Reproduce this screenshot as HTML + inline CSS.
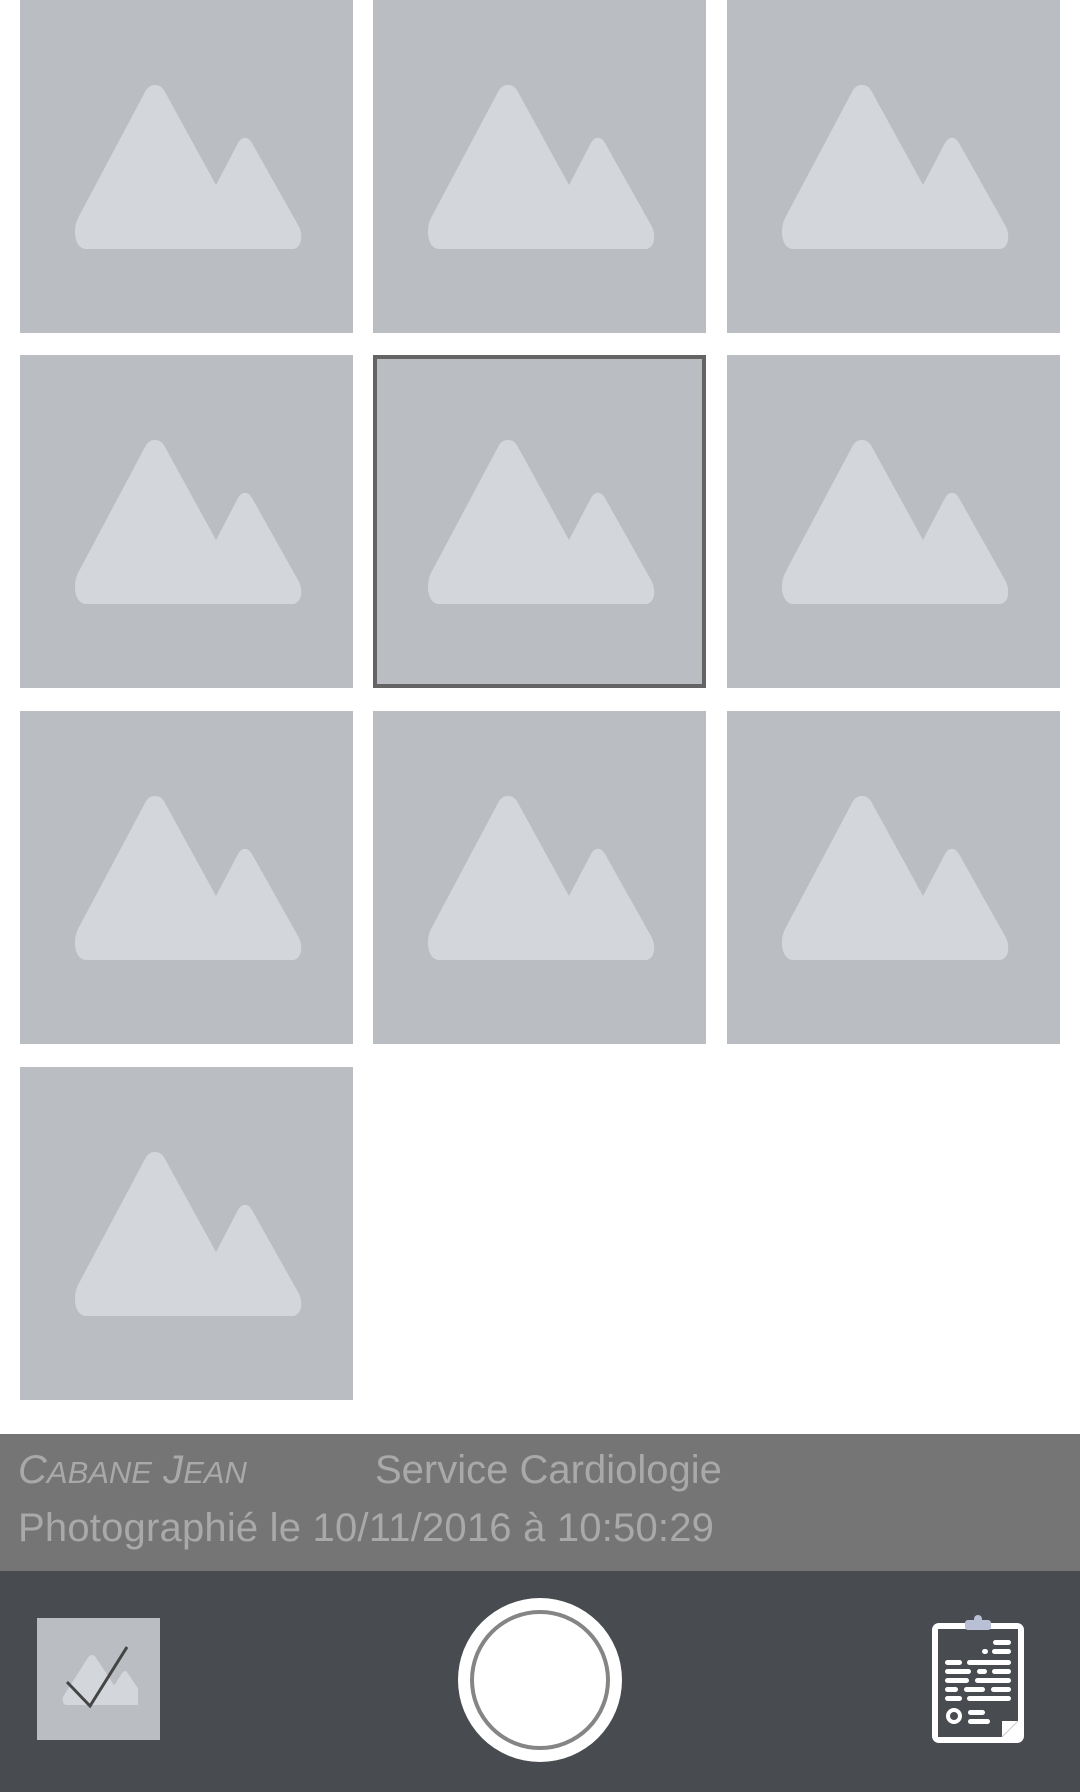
<!DOCTYPE html>
<html><head><meta charset="utf-8"><style>
*{margin:0;padding:0;box-sizing:border-box}
body{width:1080px;height:1792px;background:#fff;position:relative;overflow:hidden;font-family:"Liberation Sans",sans-serif}
.t{position:absolute;width:333px;height:333px;background:#babdc2}
.t svg{position:absolute;left:0;top:0}
.sel{border:4px solid #646464}
.sel svg{left:-4px;top:-4px}
#info{position:absolute;left:0;top:1434px;width:1080px;height:137px;background:#757575;color:#a9a9a9}
#bar{position:absolute;left:0;top:1571px;width:1080px;height:221px;background:#484b50}
</style></head><body>
<svg width="0" height="0" style="position:absolute"><defs><symbol id="m" viewBox="0 0 333 333"><path fill="#d3d6db" d="M135 85 C130 85 127 88 125 92 L58 218 C52 230 55 249 66 249 L272 249 C283 249 283 233 278 225 L232 143 C228 136 222 136 218 143 L196 185 L145 92 C143 88 140 85 135 85Z"/></symbol></defs></svg>
<div class="t" style="left:20px;top:0"><svg width="333" height="333"><use href="#m"/></svg></div>
<div class="t" style="left:373px;top:0"><svg width="333" height="333"><use href="#m"/></svg></div>
<div class="t" style="left:727px;top:0"><svg width="333" height="333"><use href="#m"/></svg></div>
<div class="t" style="left:20px;top:355px"><svg width="333" height="333"><use href="#m"/></svg></div>
<div class="t sel" style="left:373px;top:355px"><svg width="333" height="333"><use href="#m"/></svg></div>
<div class="t" style="left:727px;top:355px"><svg width="333" height="333"><use href="#m"/></svg></div>
<div class="t" style="left:20px;top:711px"><svg width="333" height="333"><use href="#m"/></svg></div>
<div class="t" style="left:373px;top:711px"><svg width="333" height="333"><use href="#m"/></svg></div>
<div class="t" style="left:727px;top:711px"><svg width="333" height="333"><use href="#m"/></svg></div>
<div class="t" style="left:20px;top:1067px"><svg width="333" height="333"><use href="#m"/></svg></div>
<div id="info">
<div style="position:absolute;left:18px;top:14px;font-size:40px;font-style:italic">C<span style="font-size:31px">ABANE</span> J<span style="font-size:31px">EAN</span></div>
<div style="position:absolute;left:375px;top:14px;font-size:40px">Service Cardiologie</div>
<div style="position:absolute;left:18px;top:72px;font-size:40px;letter-spacing:0.2px">Photographié le 10/11/2016 à 10:50:29</div>
</div>
<div id="bar">
<div style="position:absolute;left:37px;top:47px;width:123px;height:122px;background:#babdc2">
<svg width="123" height="122" style="position:absolute;left:0;top:0">
<svg x="18" y="37" width="83" height="50" viewBox="34 85 227 164" preserveAspectRatio="none"><path fill="#d3d6db" d="M135 85 C130 85 127 88 125 92 L58 218 C52 230 55 249 66 249 L272 249 C283 249 283 233 278 225 L232 143 C228 136 222 136 218 143 L196 185 L145 92 C143 88 140 85 135 85Z"/></svg>
<path d="M30 64 L53 88 L90 29" fill="none" stroke="#444" stroke-width="3"/></svg>
</div>
<div style="position:absolute;left:458px;top:27px;width:164px;height:164px;border-radius:50%;background:#fff"></div>
<div style="position:absolute;left:470px;top:39px;width:140px;height:140px;border-radius:50%;border:4px solid #858585;background:#fff"></div>
<svg style="position:absolute;left:925px;top:40px" width="110" height="140" viewBox="0 0 110 140">
<rect x="7" y="12" width="92" height="120" rx="7" fill="#fff"/>
<rect x="13" y="18" width="80" height="108" fill="#484b50"/>
<path d="M93 126 L77 126 L77 110 L93 110Z" fill="#fff"/>
<path d="M77 126 L93 110" stroke="#ccc" stroke-width="1"/>
<circle cx="53" cy="8" r="4" fill="#b9c0d6"/>
<rect x="40" y="9" width="26" height="10" rx="3" fill="#b9c0d6"/>
<g fill="#fff">
<rect x="68" y="29" width="18" height="5" rx="2.5"/>
<rect x="57" y="38" width="6" height="5" rx="2.5"/><rect x="67" y="38" width="19" height="5" rx="2.5"/>
<rect x="20" y="49" width="17" height="5" rx="2.5"/><rect x="42" y="49" width="44" height="5" rx="2.5"/>
<rect x="20" y="58" width="26" height="5" rx="2.5"/><rect x="52" y="58" width="10" height="5" rx="2.5"/><rect x="67" y="58" width="19" height="5" rx="2.5"/>
<rect x="20" y="67" width="24" height="5" rx="2.5"/><rect x="50" y="67" width="36" height="5" rx="2.5"/>
<rect x="20" y="76" width="13" height="5" rx="2.5"/><rect x="39" y="76" width="21" height="5" rx="2.5"/><rect x="66" y="76" width="20" height="5" rx="2.5"/>
<rect x="20" y="85" width="17" height="5" rx="2.5"/><rect x="42" y="85" width="44" height="5" rx="2.5"/>
<rect x="43" y="99" width="17" height="5" rx="2.5"/><rect x="43" y="108" width="22" height="5" rx="2.5"/>
</g>
<circle cx="29" cy="105" r="6" fill="none" stroke="#fff" stroke-width="4"/>
</svg>
</div>
</body></html>
